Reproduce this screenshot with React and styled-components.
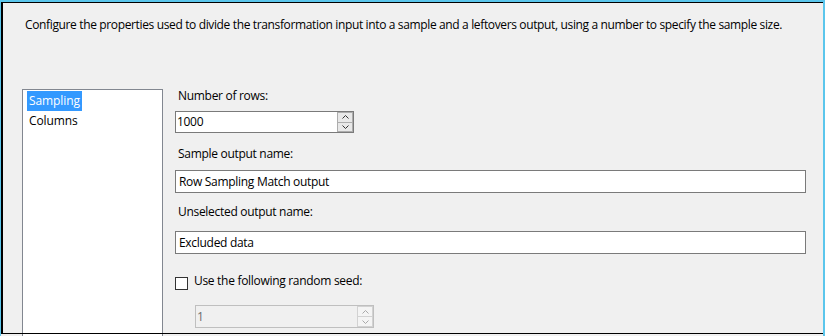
import React from "react";
import styled, { createGlobalStyle } from "styled-components";

const GlobalStyle = createGlobalStyle`
  html, body {
    margin: 0;
    padding: 0;
    background: #f0f0f0;
    overflow: hidden;
  }
  * {
    box-sizing: border-box;
  }
`;

const Window = styled.div`
  width: 825px;
  height: 336px;
  overflow: hidden;
  background: #f0f0f0;
  border-top: 2px solid #5bc6ec;
  border-left: 1px solid #5bc6ec;
  border-right: 2px solid #5bc6ec;
  font-family: "Open Sans", "Noto Sans", sans-serif;
  font-size: 12px;
  line-height: 16px;
  letter-spacing: -0.3px;
  color: #000;
`;

const Panel = styled.div`
  position: relative;
  height: 100%;

  &::after {
    content: "";
    position: absolute;
    left: 0;
    top: 0;
    width: 821px;
    height: 330px;
    border: 1px solid #000;
    border-left-width: 2px;
    pointer-events: none;
  }
`;

const Description = styled.p`
  margin: 0;
  padding: 15px 0 0 24px;
  white-space: nowrap;
  letter-spacing: -0.36px;
`;

const Body = styled.div`
  display: flex;
  align-items: flex-start;
  margin-top: 55px;
`;

const List = styled.div`
  width: 141px;
  height: 260px;
  margin: 1px 0 0 21px;
  padding: 1px 0 0 4px;
  background: #fff;
  border: 1px solid #828790;
  display: flex;
  flex-direction: column;
  align-items: flex-start;
`;

const ListItem = styled.div`
  padding: 0 2px;
  line-height: 20px;
  height: 20px;
  letter-spacing: -0.1px;
  background: ${(p) => (p.$selected ? "#3399ff" : "transparent")};
  color: ${(p) => (p.$selected ? "#fff" : "#000")};
`;

const Form = styled.div`
  display: flex;
  flex-direction: column;
  align-items: flex-start;
  margin-left: 12px;
  width: 631px;
`;

const Label = styled.div`
  margin-top: ${(p) => p.$top || 0}px;
  padding-left: 3px;
`;

const TextBox = styled.div`
  width: 100%;
  height: 23px;
  margin-top: ${(p) => p.$top || 0}px;
  padding: 0 3px;
  background: #fff;
  border: 1px solid #7a7a7a;
  line-height: 21px;
  white-space: nowrap;
`;

const Spinner = styled.div`
  display: flex;
  width: 179px;
  height: ${(p) => p.$height}px;
  margin-top: ${(p) => p.$top || 0}px;
  margin-left: ${(p) => p.$left || 0}px;
  padding: 0 0 0 1px;
  border: 1px solid ${(p) => (p.$disabled ? "#bfbfbf" : "#7a7a7a")};
  background: ${(p) => (p.$disabled ? "#f0f0f0" : "#fff")};
  color: ${(p) => (p.$disabled ? "#6d6d6d" : "#000")};
`;

const SpinValue = styled.div`
  flex: 1;
  line-height: ${(p) => p.$height - 2}px;
`;

const SpinButtons = styled.div`
  width: 16px;
  display: flex;
  flex-direction: column;
`;

const SpinButton = styled.div`
  flex: 1;
  display: flex;
  align-items: center;
  justify-content: center;
  background: ${(p) => (p.$disabled ? "#f4f4f4" : "#e8e8e8")};
  border: 1px solid ${(p) => (p.$disabled ? "#d2d2d2" : "#adadad")};
  & + & {
    border-top: none;
  }
`;

const CheckRow = styled.div`
  display: flex;
  align-items: flex-start;
  margin-top: ${(p) => p.$top || 0}px;
`;

const CheckBox = styled.div`
  width: 13px;
  height: 13px;
  margin-top: 4px;
  background: #fff;
  border: 1px solid #333;
`;

const CheckLabel = styled.span`
  margin-left: 6px;
`;

function Chevron({ up, color }) {
  return (
    <svg width="7" height="4" viewBox="0 0 7 4">
      <polyline
        points={up ? "0.5,3.5 3.5,0.5 6.5,3.5" : "0.5,0.5 3.5,3.5 6.5,0.5"}
        fill="none"
        stroke={color}
        strokeWidth="1"
      />
    </svg>
  );
}

function NumberBox({ value, height, top, left, disabled }) {
  const arrow = disabled ? "#a8a8a8" : "#333";
  return (
    <Spinner $height={height} $top={top} $left={left} $disabled={disabled}>
      <SpinValue $height={height}>{value}</SpinValue>
      <SpinButtons>
        <SpinButton $disabled={disabled}>
          <Chevron up color={arrow} />
        </SpinButton>
        <SpinButton $disabled={disabled}>
          <Chevron color={arrow} />
        </SpinButton>
      </SpinButtons>
    </Spinner>
  );
}

export default function App() {
  return (
    <>
      <GlobalStyle />
      <Window>
        <Panel>
          <Description>
            Configure the properties used to divide the transformation input into a sample and a
            leftovers output, using a number to specify the sample size.
          </Description>
          <Body>
            <List>
              <ListItem $selected>Sampling</ListItem>
              <ListItem>Columns</ListItem>
            </List>
            <Form>
              <Label>Number of rows:</Label>
              <NumberBox value="1000" height={22} top={7} />
              <Label $top={13}>Sample output name:</Label>
              <TextBox $top={8}>Row Sampling Match output</TextBox>
              <Label $top={11}>Unselected output name:</Label>
              <TextBox $top={11}>Excluded data</TextBox>
              <CheckRow $top={19}>
                <CheckBox />
                <CheckLabel>Use the following random seed:</CheckLabel>
              </CheckRow>
              <NumberBox value="1" height={23} top={15} left={20} disabled />
            </Form>
          </Body>
        </Panel>
      </Window>
    </>
  );
}
